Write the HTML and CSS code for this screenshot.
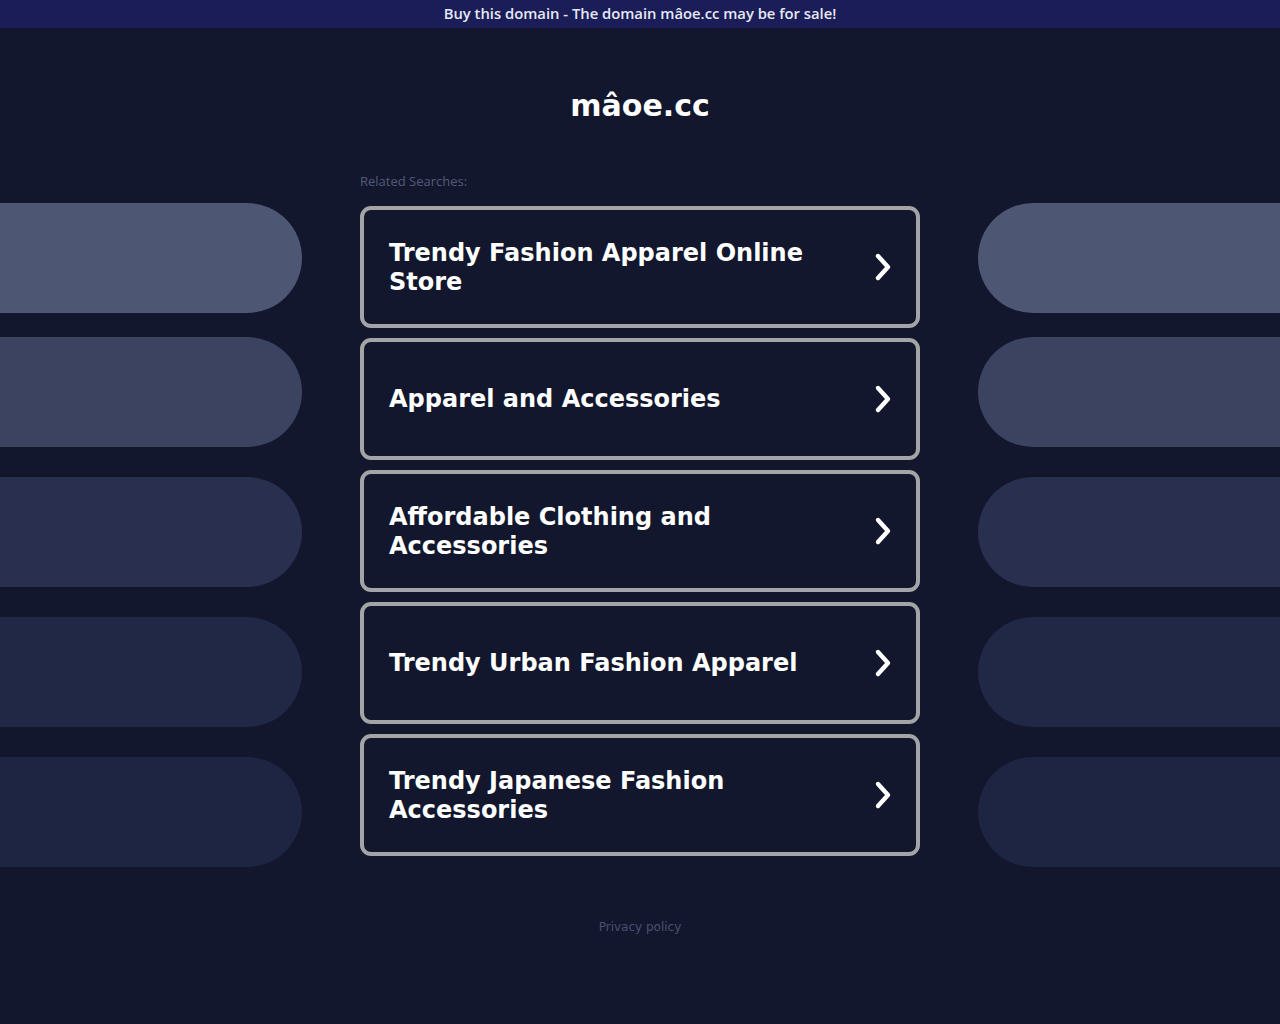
FILE: index.html
```html
<!DOCTYPE html>
<html lang="en">
<head>
    <meta charset="UTF-8">
    <meta name="viewport" content="width=device-width, initial-scale=1.0">
    <title>mâoe.cc</title>
    <link rel="stylesheet" href="styles.css">
</head>
<body>

    <div class="sale-bar">Buy this domain - The domain mâoe.cc may be for sale!</div>

    <div class="page">
        <div class="pills pills-left">
            <div class="pill pill-1"></div>
            <div class="pill pill-2"></div>
            <div class="pill pill-3"></div>
            <div class="pill pill-4"></div>
            <div class="pill pill-5"></div>
        </div>

        <div class="content">
            <h1 class="domain">mâoe.cc</h1>
            <div class="related-label">Related Searches:</div>
            <div class="links">
                <a class="link-card" href="#"><span>Trendy Fashion Apparel Online Store</span><svg class="chevron" viewBox="0 0 20 32"><path d="M5 5 L15 16 L5 27"/></svg></a>
                <a class="link-card" href="#"><span>Apparel and Accessories</span><svg class="chevron" viewBox="0 0 20 32"><path d="M5 5 L15 16 L5 27"/></svg></a>
                <a class="link-card" href="#"><span>Affordable Clothing and Accessories</span><svg class="chevron" viewBox="0 0 20 32"><path d="M5 5 L15 16 L5 27"/></svg></a>
                <a class="link-card" href="#"><span>Trendy Urban Fashion Apparel</span><svg class="chevron" viewBox="0 0 20 32"><path d="M5 5 L15 16 L5 27"/></svg></a>
                <a class="link-card" href="#"><span>Trendy Japanese Fashion Accessories</span><svg class="chevron" viewBox="0 0 20 32"><path d="M5 5 L15 16 L5 27"/></svg></a>
            </div>
            <a class="privacy" href="#">Privacy policy</a>
        </div>

        <div class="pills pills-right">
            <div class="pill pill-1"></div>
            <div class="pill pill-2"></div>
            <div class="pill pill-3"></div>
            <div class="pill pill-4"></div>
            <div class="pill pill-5"></div>
        </div>
    </div>

</body>
</html>
```

FILE: styles.css
```css
body {
    margin: 0;
    background-color: #12172d;
    color: white;
    font-family: "DejaVu Sans", sans-serif;
    height: 1024px;
    overflow: hidden;
}

.sale-bar {
    background-color: #1a1d58;
    color: #e6e8f4;
    font-family: "Open Sans", sans-serif;
    font-size: 14.8px;
    font-weight: 600;
    height: 28px;
    line-height: 27px;
    text-align: center;
}

.page {
    display: grid;
    grid-template-columns: 302px 560px 302px;
    column-gap: 58px;
}

.pills {
    display: flex;
    flex-direction: column;
    padding-top: 175px;
}

.pill {
    height: 110px;
    margin-top: 30px;
}

.pills .pill-1 {
    margin-top: 0;
}

.pills .pill-2 {
    margin-top: 24px;
}

.pills-left .pill {
    border-radius: 0 55px 55px 0;
}

.pills-right .pill {
    border-radius: 55px 0 0 55px;
}

.pill-1 { background-color: #4d5673; }
.pill-2 { background-color: #3b4361; }
.pill-3 { background-color: #29304f; }
.pill-4 { background-color: #202846; }
.pill-5 { background-color: #1d2543; }

.content {
    display: flex;
    flex-direction: column;
}

.domain {
    margin: 60px 0 0;
    font-size: 30px;
    line-height: 36px;
    font-weight: bold;
    text-align: center;
}

.related-label {
    margin-top: 49px;
    font-family: "Open Sans", sans-serif;
    font-size: 13px;
    line-height: 16px;
    color: #535a78;
}

.links {
    margin-top: 17px;
    display: flex;
    flex-direction: column;
    gap: 10px;
}

.link-card {
    display: flex;
    align-items: center;
    justify-content: space-between;
    height: 114px;
    padding: 0 25px;
    border: 4px solid #a3a4a6;
    border-radius: 11px;
    color: white;
    text-decoration: none;
    font-size: 24px;
    font-weight: bold;
    line-height: 29px;
}

.link-card span {
    max-width: 460px;
    padding-top: 1px;
}

.chevron {
    width: 20px;
    height: 32px;
    margin-right: -2px;
}

.chevron path {
    fill: none;
    stroke: white;
    stroke-width: 4.4;
    stroke-linecap: round;
    stroke-linejoin: round;
}

.privacy {
    margin-top: 64px;
    text-align: center;
    font-size: 12px;
    color: #4b5170;
    text-decoration: none;
}
```
